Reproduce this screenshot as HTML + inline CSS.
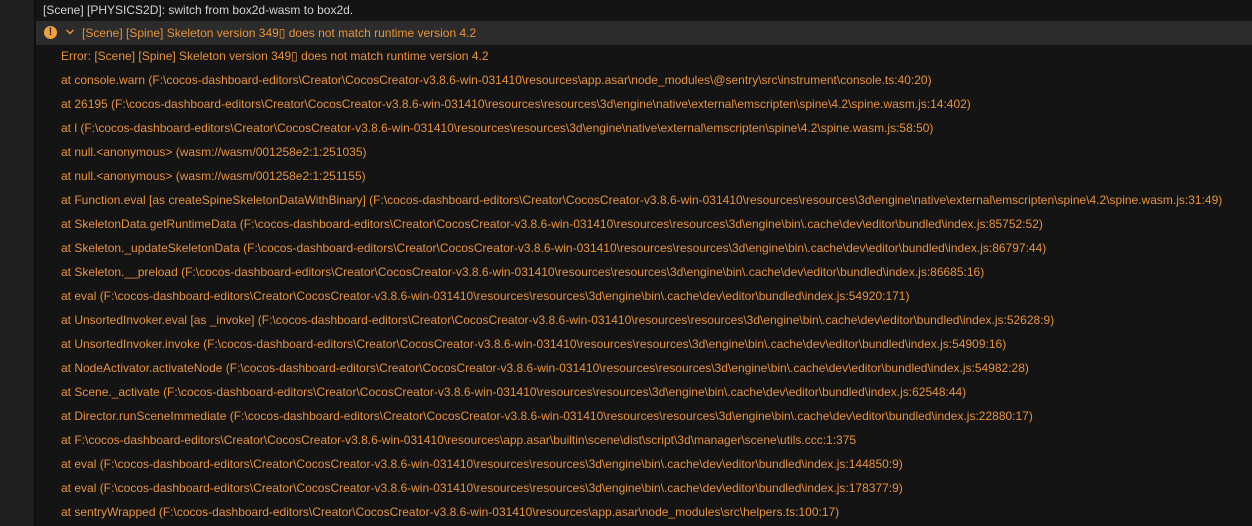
<!DOCTYPE html>
<html><head><meta charset="utf-8"><style>
html,body{margin:0;padding:0;width:1252px;height:526px;overflow:hidden;background:#141414;font-family:"Liberation Sans",Arial,sans-serif;font-size:12px;}
.left{position:absolute;left:0;top:0;width:34px;height:526px;background:#1f1f1f;border-right:1px solid #0a0a0a;}
.top{position:absolute;left:43px;top:2px;color:#d2d2d2;line-height:16px;white-space:nowrap;}
.hdr{position:absolute;left:36px;top:21px;right:0;height:24px;background:#2c2c2c;}
.icon{position:absolute;left:44px;top:26px;width:13px;height:13px;border-radius:50%;background:#f0a03c;color:#2c2c2c;font-weight:bold;font-size:11px;line-height:13px;text-align:center;}
.chev{position:absolute;left:65px;top:28px;}
.htxt{position:absolute;left:82px;top:25px;color:#e8933a;line-height:16px;white-space:nowrap;}
.l{position:absolute;left:61px;color:#e8933a;line-height:16px;white-space:nowrap;}
</style></head><body>
<div class="left"></div>
<div class="top">[Scene] [PHYSICS2D]: switch from box2d-wasm to box2d.</div>
<div class="hdr"></div>
<div class="icon">!</div>
<svg class="chev" width="10" height="8" viewBox="0 0 10 8"><path d="M1.5 2 L5 5.5 L8.5 2" fill="none" stroke="#e8933a" stroke-width="1.5"/></svg>
<div class="htxt">[Scene] [Spine] Skeleton version 349&#9647; does not match runtime version 4.2</div>
<div class="l" style="top:48px">Error: [Scene] [Spine] Skeleton version 349&#9647; does not match runtime version 4.2</div>
<div class="l" style="top:72px">at console.warn (F:\cocos-dashboard-editors\Creator\CocosCreator-v3.8.6-win-031410\resources\app.asar\node_modules\@sentry\src\instrument\console.ts:40:20)</div>
<div class="l" style="top:96px">at 26195 (F:\cocos-dashboard-editors\Creator\CocosCreator-v3.8.6-win-031410\resources\resources\3d\engine\native\external\emscripten\spine\4.2\spine.wasm.js:14:402)</div>
<div class="l" style="top:120px">at l (F:\cocos-dashboard-editors\Creator\CocosCreator-v3.8.6-win-031410\resources\resources\3d\engine\native\external\emscripten\spine\4.2\spine.wasm.js:58:50)</div>
<div class="l" style="top:144px">at null.&lt;anonymous&gt; (wasm://wasm/001258e2:1:251035)</div>
<div class="l" style="top:168px">at null.&lt;anonymous&gt; (wasm://wasm/001258e2:1:251155)</div>
<div class="l" style="top:192px">at Function.eval [as createSpineSkeletonDataWithBinary] (F:\cocos-dashboard-editors\Creator\CocosCreator-v3.8.6-win-031410\resources\resources\3d\engine\native\external\emscripten\spine\4.2\spine.wasm.js:31:49)</div>
<div class="l" style="top:216px">at SkeletonData.getRuntimeData (F:\cocos-dashboard-editors\Creator\CocosCreator-v3.8.6-win-031410\resources\resources\3d\engine\bin\.cache\dev\editor\bundled\index.js:85752:52)</div>
<div class="l" style="top:240px">at Skeleton._updateSkeletonData (F:\cocos-dashboard-editors\Creator\CocosCreator-v3.8.6-win-031410\resources\resources\3d\engine\bin\.cache\dev\editor\bundled\index.js:86797:44)</div>
<div class="l" style="top:264px">at Skeleton.__preload (F:\cocos-dashboard-editors\Creator\CocosCreator-v3.8.6-win-031410\resources\resources\3d\engine\bin\.cache\dev\editor\bundled\index.js:86685:16)</div>
<div class="l" style="top:288px">at eval (F:\cocos-dashboard-editors\Creator\CocosCreator-v3.8.6-win-031410\resources\resources\3d\engine\bin\.cache\dev\editor\bundled\index.js:54920:171)</div>
<div class="l" style="top:312px">at UnsortedInvoker.eval [as _invoke] (F:\cocos-dashboard-editors\Creator\CocosCreator-v3.8.6-win-031410\resources\resources\3d\engine\bin\.cache\dev\editor\bundled\index.js:52628:9)</div>
<div class="l" style="top:336px">at UnsortedInvoker.invoke (F:\cocos-dashboard-editors\Creator\CocosCreator-v3.8.6-win-031410\resources\resources\3d\engine\bin\.cache\dev\editor\bundled\index.js:54909:16)</div>
<div class="l" style="top:360px">at NodeActivator.activateNode (F:\cocos-dashboard-editors\Creator\CocosCreator-v3.8.6-win-031410\resources\resources\3d\engine\bin\.cache\dev\editor\bundled\index.js:54982:28)</div>
<div class="l" style="top:384px">at Scene._activate (F:\cocos-dashboard-editors\Creator\CocosCreator-v3.8.6-win-031410\resources\resources\3d\engine\bin\.cache\dev\editor\bundled\index.js:62548:44)</div>
<div class="l" style="top:408px">at Director.runSceneImmediate (F:\cocos-dashboard-editors\Creator\CocosCreator-v3.8.6-win-031410\resources\resources\3d\engine\bin\.cache\dev\editor\bundled\index.js:22880:17)</div>
<div class="l" style="top:432px">at F:\cocos-dashboard-editors\Creator\CocosCreator-v3.8.6-win-031410\resources\app.asar\builtin\scene\dist\script\3d\manager\scene\utils.ccc:1:375</div>
<div class="l" style="top:456px">at eval (F:\cocos-dashboard-editors\Creator\CocosCreator-v3.8.6-win-031410\resources\resources\3d\engine\bin\.cache\dev\editor\bundled\index.js:144850:9)</div>
<div class="l" style="top:480px">at eval (F:\cocos-dashboard-editors\Creator\CocosCreator-v3.8.6-win-031410\resources\resources\3d\engine\bin\.cache\dev\editor\bundled\index.js:178377:9)</div>
<div class="l" style="top:504px">at sentryWrapped (F:\cocos-dashboard-editors\Creator\CocosCreator-v3.8.6-win-031410\resources\app.asar\node_modules\src\helpers.ts:100:17)</div>
</body></html>
